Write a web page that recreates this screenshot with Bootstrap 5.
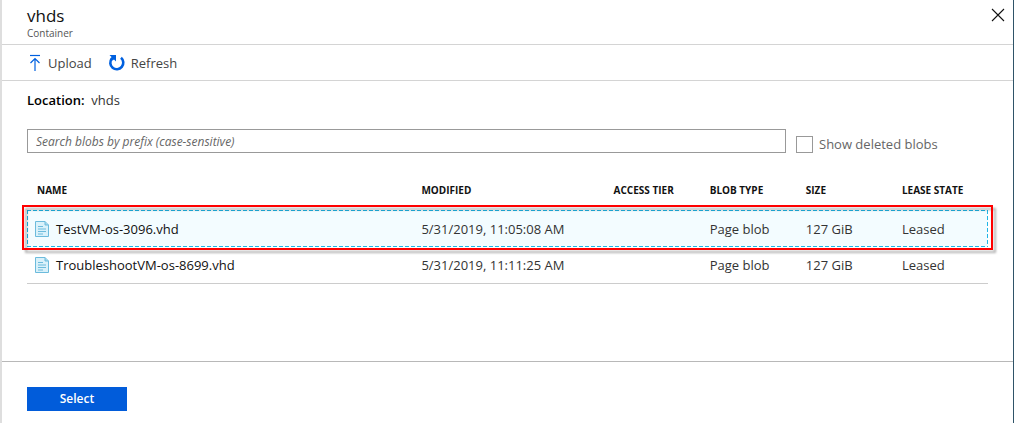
<!DOCTYPE html>
<html lang="en">
<head>
<meta charset="utf-8">
<meta name="viewport" content="width=device-width, initial-scale=1">
<title>vhds - Container</title>
<link rel="stylesheet" href="https://cdn.jsdelivr.net/npm/bootstrap@5.3.0/dist/css/bootstrap.min.css">
<style>
  body { font: 13px/20px "Open Sans", "Noto Sans", sans-serif; color: #333; background: #fff; }
  .blade { border-left: 2px solid #dedede; border-right: 1px solid #2f5468; }
  .blade-head { height: 45px; border-bottom: 1px solid #d4d4d4; padding: 6px 8px 0 25px; }
  .blade-head h1 { font-size: 17px; line-height: 20px; color: #111; font-weight: 500; }
  .blade-head p { font-size: 10px; line-height: 14px; color: #555; }
  .close-btn { width: 14px; height: 14px; margin-top: 2px; }
  .toolbar { height: 36px; border-bottom: 1px solid #d4d4d4; padding: 0 25px; gap: 16px; }
  .tool { color: #444; gap: 5px; }
  .content { padding: 9px 25px 0; }
  .content b { color: #000; font-weight: 600; }
  .search-row { gap: 10px; margin-top: 19px; }
  .search { height: 24px; font-size: 12px; line-height: 16px; font-style: italic; border: 1px solid #999; border-radius: 0; padding: 0 8px; color: #333; }
  .search::placeholder { color: #666; }
  .deleted { width: 192px; gap: 6px; padding-top: 5px; color: #666; }
  .deleted input { width: 17px; height: 17px; border: 1px solid #999; border-radius: 0 !important; }
  .blobs { table-layout: fixed; margin-top: 16px; color: #333; }
  .blobs th { font-size: 10px; font-weight: 700; color: #111; height: 40px; padding: 0 10px; white-space: nowrap; }
  .blobs td { height: 36px; padding: 0 10px; white-space: nowrap; }
  .blobs .file { padding-left: 8px; color: #111; font-weight: 500; }
  .blobs .file div { gap: 7px; }
  .blobs tbody tr:last-child { border-bottom: 1px solid #ccc; }
  .blobs .chosen td { height: 37px; }
  .chosen {
    --across: repeating-linear-gradient(90deg, #1fb5e6 0 4px, #f3fcff 4px 6px);
    --down: repeating-linear-gradient(#1fb5e6 0 4px, #f3fcff 4px 6px);
    background: var(--across) top/100% 1px no-repeat, var(--across) bottom/100% 1px no-repeat, var(--down) left/1px 100% no-repeat, var(--down) right/1px 100% no-repeat, #f3fcff;
  }
  .callout { inset: -5px -5px -3px; border: 2px solid #f00; filter: drop-shadow(3px 3px 1px rgba(0,0,0,.3)); pointer-events: none; }
  .foot { border-top: 1px solid #b8b8b8; padding: 25px 25px 12px; }
  .select-btn { width: 100px; height: 24px; background: #015cda; color: #fff; font-size: 12px; font-weight: 600; line-height: 16px; }
</style>
</head>
<body>
<div class="blade d-flex flex-column min-vh-100">
  <header class="blade-head d-flex justify-content-between align-items-start">
    <div>
      <h1 class="m-0">vhds</h1>
      <p class="m-0">Container</p>
    </div>
    <button type="button" class="close-btn btn p-0 border-0 d-flex" aria-label="Close">
      <svg width="14" height="14" viewBox="0 0 14 14" stroke="#111" stroke-width="1.1"><path d="M1 1l12 12M13 1L1 13"/></svg>
    </button>
  </header>
  <div class="toolbar d-flex align-items-center">
    <button type="button" class="tool bg-transparent border-0 p-0 d-flex align-items-center">
      <svg width="16" height="18" viewBox="0 0 16 18" fill="none" stroke="#0060df"><path d="M3 1.500h10" stroke-width="1.200"/><path d="M8 17V4.500M3.500 9L8 4.500 12.500 9" stroke-width="1.200"/></svg>
      Upload
    </button>
    <button type="button" class="tool bg-transparent border-0 p-0 d-flex align-items-center">
      <svg width="18" height="18" viewBox="0 0 18 18" fill="none"><path d="M13 3.800A6.500 6.500 0 1 1 3.800 4.600" stroke="#0060df" stroke-width="2.600"/><path d="M1.500 1H8V7.500L6 5.500 4.500 6.500 2.500 4.500 3.500 3z" fill="#0060df"/></svg>
      Refresh
    </button>
  </div>
  <main class="content flex-grow-1">
    <div><b>Location:</b>&nbsp; vhds</div>
    <div class="search-row d-flex align-items-start">
      <input type="text" class="search form-control flex-grow-1" placeholder="Search blobs by prefix (case-sensitive)" aria-label="Search blobs by prefix">
      <div class="deleted d-flex align-items-center flex-shrink-0">
        <input type="checkbox" class="form-check-input m-0 flex-shrink-0" id="deleted">
        <label for="deleted">Show deleted blobs</label>
      </div>
    </div>
    <table class="blobs w-100">
      <colgroup><col style="width:40%"><col style="width:20%"><col style="width:10%"><col style="width:10%"><col style="width:10%"><col style="width:10%"></colgroup>
      <thead>
        <tr><th scope="col">NAME</th><th scope="col">MODIFIED</th><th scope="col">ACCESS TIER</th><th scope="col">BLOB TYPE</th><th scope="col">SIZE</th><th scope="col">LEASE STATE</th></tr>
      </thead>
      <tbody>
        <tr class="chosen position-relative">
          <td class="file"><div class="d-flex align-items-center">
            <svg width="14" height="16" viewBox="0 0 14 16"><path d="M.5.5h9.500l3.500 3.500v11.500H.5z" fill="#d9f1fa" stroke="#6cbbdc"/><path d="M10 .5V4h3.500" fill="#a5d8ec" stroke="#6cbbdc"/><path d="M3 5.500h5M3 8h8M3 10.500h8M3 13h5" stroke="#6cbbdc"/></svg>
            TestVM-os-3096.vhd</div><div class="callout position-absolute"></div></td>
          <td>5/31/2019, 11:05:08 AM</td><td></td><td>Page blob</td><td>127 GiB</td><td>Leased</td>
        </tr>
        <tr>
          <td class="file"><div class="d-flex align-items-center">
            <svg width="14" height="16" viewBox="0 0 14 16"><path d="M.5.5h9.500l3.500 3.500v11.500H.5z" fill="#d9f1fa" stroke="#6cbbdc"/><path d="M10 .5V4h3.500" fill="#a5d8ec" stroke="#6cbbdc"/><path d="M3 5.500h5M3 8h8M3 10.500h8M3 13h5" stroke="#6cbbdc"/></svg>
            TroubleshootVM-os-8699.vhd</div></td>
          <td>5/31/2019, 11:11:25 AM</td><td></td><td>Page blob</td><td>127 GiB</td><td>Leased</td>
        </tr>
      </tbody>
    </table>
  </main>
  <footer class="foot">
    <button type="button" class="select-btn btn rounded-0 border-0 p-0">Select</button>
  </footer>
</div>
<script src="https://cdn.jsdelivr.net/npm/bootstrap@5.3.0/dist/js/bootstrap.bundle.min.js"></script>
</body>
</html>
